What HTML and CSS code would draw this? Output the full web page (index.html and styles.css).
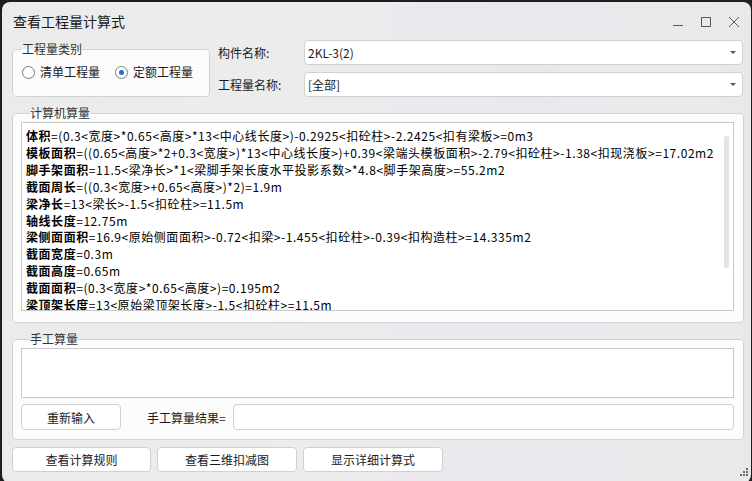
FILE: index.html
```html
<!DOCTYPE html>
<html lang="zh-CN">
<head>
<meta charset="utf-8">
<title>查看工程量计算式</title>
<link rel="stylesheet" href="styles.css">
</head>
<body>
<div class="window">
  <div class="titlebar">
    <span class="title">查看工程量计算式</span>
    <div class="controls">
      <svg class="ctl" width="10" height="10" viewBox="0 0 10 10"><path d="M0 8.5H10" stroke="#5a5a5a" stroke-width="1"/></svg>
      <svg class="ctl" width="10" height="10" viewBox="0 0 10 10"><rect x="0.5" y="0.5" width="9" height="9" fill="none" stroke="#5a5a5a" stroke-width="1"/></svg>
      <svg class="ctl" width="10" height="10" viewBox="0 0 10 10"><path d="M0 0L10 10M10 0L0 10" stroke="#5a5a5a" stroke-width="1"/></svg>
    </div>
  </div>
  <div class="content">
    <div class="top-row">
      <fieldset class="group kind">
        <legend>工程量类别</legend>
        <div class="radios">
          <label class="radio"><span class="circle"></span>清单工程量</label>
          <label class="radio checked"><span class="circle"></span>定额工程量</label>
        </div>
      </fieldset>
      <div class="fields">
        <span class="flabel">构件名称:</span>
        <div class="select"><span>2KL-3(2)</span><span class="arrow"></span></div>
        <span class="flabel">工程量名称:</span>
        <div class="select"><span>[全部]</span><span class="arrow"></span></div>
      </div>
    </div>

    <fieldset class="group computer">
      <legend>计算机算量</legend>
      <div class="formula">
        <div class="lines">
          <p><b>体积</b>=(0.3&lt;宽度&gt;*0.65&lt;高度&gt;*13&lt;中心线长度&gt;)-0.2925&lt;扣砼柱&gt;-2.2425&lt;扣有梁板&gt;=0m3</p>
          <p><b>模板面积</b>=((0.65&lt;高度&gt;*2+0.3&lt;宽度&gt;)*13&lt;中心线长度&gt;)+0.39&lt;梁端头模板面积&gt;-2.79&lt;扣砼柱&gt;-1.38&lt;扣现浇板&gt;=17.02m2</p>
          <p><b>脚手架面积</b>=11.5&lt;梁净长&gt;*1&lt;梁脚手架长度水平投影系数&gt;*4.8&lt;脚手架高度&gt;=55.2m2</p>
          <p><b>截面周长</b>=((0.3&lt;宽度&gt;+0.65&lt;高度&gt;)*2)=1.9m</p>
          <p><b>梁净长</b>=13&lt;梁长&gt;-1.5&lt;扣砼柱&gt;=11.5m</p>
          <p><b>轴线长度</b>=12.75m</p>
          <p><b>梁侧面面积</b>=16.9&lt;原始侧面面积&gt;-0.72&lt;扣梁&gt;-1.455&lt;扣砼柱&gt;-0.39&lt;扣构造柱&gt;=14.335m2</p>
          <p><b>截面宽度</b>=0.3m</p>
          <p><b>截面高度</b>=0.65m</p>
          <p><b>截面面积</b>=(0.3&lt;宽度&gt;*0.65&lt;高度&gt;)=0.195m2</p>
          <p><b>梁顶架长度</b>=13&lt;原始梁顶架长度&gt;-1.5&lt;扣砼柱&gt;=11.5m</p>
        </div>
        <div class="scrollbar"><div class="thumb"></div></div>
      </div>
    </fieldset>

    <fieldset class="group manual">
      <legend>手工算量</legend>
      <div class="manual-box"></div>
      <div class="manual-row">
        <button class="btn reset">重新输入</button>
        <span class="result-label">手工算量结果=</span>
        <div class="result-input"></div>
      </div>
    </fieldset>

    <div class="actions">
      <button class="btn action first">查看计算规则</button>
      <button class="btn action">查看三维扣减图</button>
      <button class="btn action">显示详细计算式</button>
    </div>
  </div>
  <div class="grip">
    <svg width="9" height="9" viewBox="0 0 9 9"><g fill="#6b6b6b"><rect x="6" y="0" width="2" height="2"/><rect x="3" y="3" width="2" height="2"/><rect x="6" y="3" width="2" height="2"/><rect x="0" y="6" width="2" height="2"/><rect x="3" y="6" width="2" height="2"/><rect x="6" y="6" width="2" height="2"/></g></svg>
  </div>
</div>
</body>
</html>
```
FILE: styles.css
```css
* { box-sizing: border-box; }
html, body { margin: 0; height: 100%; }
body {
  background: #1d1f1c;
  padding: 2px 1px 0 2px;
  overflow: hidden;
  font-family: "Noto Sans CJK SC", "Microsoft YaHei", sans-serif;
  color: #1a1a1a;
}
.window {
  position: relative;
  width: 749px;
  height: 481px;
  border-radius: 8px;
  background: linear-gradient(90deg, #ebebeb 0%, #ececec 40%, #ebe8ee 60%, #eae9ea 100%);
  display: flex;
  flex-direction: column;
}
.titlebar {
  height: 38px;
  flex: none;
  display: flex;
  align-items: center;
  padding: 0 12px 0 11px;
}
.title { font-size: 14px; line-height: 20px; color: #1a1a1a; }
.controls { margin-left: auto; display: flex; align-items: center; gap: 18px; padding-top: 1px; }
.ctl { display: block; }

.content { display: flex; flex-direction: column; padding: 0 7px 0 10px; }

.group {
  margin: 0;
  padding: 0;
  min-width: 0;
  border: 1px solid #d2d2d2;
  border-radius: 4px;
  background: #fcfcfc;
}
.group legend {
  padding: 0;
  margin-left: 9px;
  font-size: 12px;
  line-height: 14px;
  color: #333;
}

.top-row { display: flex; height: 57px; }
.kind { width: 198px; margin-top: 2px; height: 55px; }
.radios { display: flex; align-items: center; height: 32px; padding-left: 9px; }
.radio { display: flex; align-items: center; gap: 5px; font-size: 12px; line-height: 16px; color: #1a1a1a; }
.radio + .radio { margin-left: 15px; }
.circle {
  width: 13px; height: 13px; border-radius: 50%;
  border: 1px solid #7a7a7a; background: #fff;
  display: flex; align-items: center; justify-content: center;
}
.checked .circle::after {
  content: ""; width: 5px; height: 5px; border-radius: 50%; background: #1e6fd9;
}

.fields {
  margin-left: 8px;
  display: grid;
  grid-template-columns: 86px 439px;
  grid-template-rows: 25px 25px;
  row-gap: 7px;
  align-items: center;
}
.flabel { font-size: 12px; color: #1a1a1a; }
.select {
  height: 25px;
  background: #fff;
  border: 1px solid #d0d0d0;
  border-radius: 4px;
  display: flex;
  align-items: center;
  padding: 0 6px 0 3px;
  font-size: 12px;
  color: #1a1a1a;
}
.arrow {
  margin-left: auto;
  width: 0; height: 0;
  border-left: 3px solid transparent;
  border-right: 3px solid transparent;
  border-top: 3px solid #555;
}

.computer { margin-top: 9px; height: 217px; padding: 2px 9px 0 8px; }
.formula {
  height: 189px;
  background: #fff;
  border: 1px solid #c9c9c9;
  display: flex;
  overflow: hidden;
}
.lines {
  flex: 1;
  min-width: 0;
  padding: 5px 4px 0 4px;
  overflow: hidden;
  font-size: 12px;
  line-height: 16.9px;
  letter-spacing: 0.55px;
  color: #000;
}
.lines p { margin: 0; white-space: nowrap; }
.lines b { font-weight: 700; }
.scrollbar { width: 12px; flex: none; padding: 13px 4px 0 3px; }
.thumb { height: 132px; border-radius: 3px; background: #e3e3e3; }

.manual { margin-top: 9px; height: 108px; padding: 2px 9px 0 8px; }
.manual-box { height: 50px; background: #fff; border: 1px solid #c9c9c9; }
.manual-row { display: flex; align-items: center; margin-top: 6px; height: 26px; }
.btn {
  font-family: inherit;
  font-size: 12px;
  color: #1a1a1a;
  background: #fff;
  border: 1px solid #d0d0d0;
  border-radius: 4px;
  padding: 0;
  margin: 0;
}
.reset { width: 100px; height: 26px; }
.result-label { margin-left: 26px; font-size: 12px; width: 86px; }
.result-input { flex: 1; height: 26px; background: #fff; border: 1px solid #d0d0d0; border-radius: 4px; }

.actions { display: flex; gap: 6px; margin-top: 7px; }
.action { width: 140px; height: 25px; }
.action.first { width: 139px; }

.grip { position: absolute; right: 2px; bottom: 6px; }
.grip svg { display: block; }
```
